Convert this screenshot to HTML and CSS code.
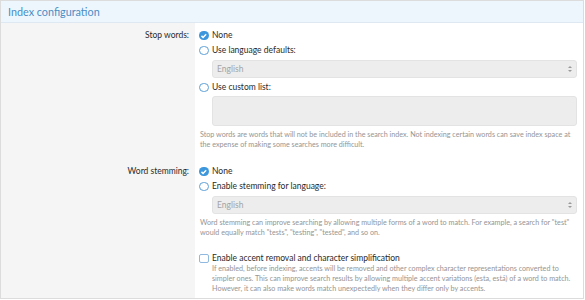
FILE: index.html
```html
<!DOCTYPE html>
<html lang="en">
<head>
    <meta charset="UTF-8">
    <title>Index configuration</title>
    <link rel="stylesheet" href="styles.css">
</head>
<body>
    <div class="block">
        <h2 class="block-header">Index configuration</h2>
        <div class="block-body">
            <dl class="form-row">
                <dt>Stop words:</dt>
                <dd>
                    <label class="choice"><span class="radio checked"><svg viewBox="0 0 10 10"><path d="M2.6 5.1 4.3 6.8 7.5 3.4"/></svg></span>None</label>
                    <label class="choice"><span class="radio"></span>Use language defaults:</label>
                    <div class="select">English<span class="arrows"></span></div>
                    <label class="choice"><span class="radio"></span>Use custom list:</label>
                    <div class="textarea"></div>
                    <p class="hint">Stop words are words that will not be included in the search index. Not indexing certain words can save index space at the expense of making some searches more difficult.</p>
                </dd>
            </dl>
            <dl class="form-row">
                <dt>Word stemming:</dt>
                <dd>
                    <label class="choice"><span class="radio checked"><svg viewBox="0 0 10 10"><path d="M2.6 5.1 4.3 6.8 7.5 3.4"/></svg></span>None</label>
                    <label class="choice"><span class="radio"></span>Enable stemming for language:</label>
                    <div class="select">English<span class="arrows"></span></div>
                    <p class="hint">Word stemming can improve searching by allowing multiple forms of a word to match. For example, a search for "test" would equally match "tests", "testing", "tested", and so on.</p>
                </dd>
            </dl>
            <dl class="form-row last">
                <dt></dt>
                <dd>
                    <label class="choice"><span class="checkbox"></span>Enable accent removal and character simplification</label>
                    <p class="hint indent">If enabled, before indexing, accents will be removed and other complex character representations converted to simpler ones. This can improve search results by allowing multiple accent variations (esta, está) of a word to match. However, it can also make words match unexpectedly when they differ only by accents.</p>
                </dd>
            </dl>
        </div>
    </div>
</body>
</html>
```

FILE: styles.css
```css
body {
    margin: 0;
    font-family: Lato, "Open Sans", sans-serif;
    color: #2a2a2a;
    background-color: #fff;
}
.block {
    width: 582px;
    height: 297px;
    border: 1px solid #dcdcdc;
    overflow: hidden;
}
.block-header {
    margin: 0;
    height: 21px;
    line-height: 22px;
    padding: 0 7px;
    font-size: 10.8px;
    font-weight: normal;
    color: #4a8cc4;
    background-color: #eef6fd;
    border-bottom: 1px solid #dde8f2;
}
.block-body {
    background: linear-gradient(to right, #f5f5f5 194px, #fff 194px);
    height: 275px;
}
.form-row {
    display: grid;
    grid-template-columns: 194px 1fr;
    margin: 0;
}
.form-row dt {
    text-align: right;
    padding: 5px 6px 0 0;
    font-size: 8.5px;
    line-height: 15px;
}
.form-row dd {
    margin: 0;
    padding: 5px 6px 9px 4px;
}
.form-row:nth-child(2) dd {
    padding-bottom: 8px;
}
.form-row.last dd {
    padding-top: 5px;
    padding-bottom: 0;
}
.choice {
    display: flex;
    align-items: center;
    font-size: 8.5px;
    line-height: 15px;
    height: 15px;
}
.radio, .checkbox {
    flex: none;
    box-sizing: border-box;
    width: 9.5px;
    height: 9.5px;
    margin-right: 3.5px;
    border: 1.3px solid #5ba0d8;
    background-color: #fff;
}
.radio {
    border-radius: 50%;
}
.radio svg {
    display: block;
    width: 100%;
    height: 100%;
    fill: none;
    stroke: #fff;
    stroke-width: 1.6;
}
.checkbox {
    border-radius: 2px;
    border-color: #8fb9de;
}
.radio.checked {
    border: none;
    background-color: #3d97dc;
}
.select {
    position: relative;
    box-sizing: border-box;
    margin: 2px 0 2px 13px;
    height: 18px;
    line-height: 16px;
    padding: 0 4px;
    font-size: 8.5px;
    color: #a3a3a3;
    background-color: #ededed;
    border: 1px solid #e3e3e3;
    border-radius: 3px;
}
.arrows {
    position: absolute;
    right: 4px;
    top: 5px;
    width: 0;
    height: 0;
    border-left: 2px solid transparent;
    border-right: 2px solid transparent;
    border-bottom: 2.5px solid #9a9a9a;
}
.arrows::after {
    content: "";
    position: absolute;
    left: -2px;
    top: 3.5px;
    border-left: 2px solid transparent;
    border-right: 2px solid transparent;
    border-top: 2.5px solid #9a9a9a;
}
.textarea {
    box-sizing: border-box;
    margin: 1px 0 0 13px;
    height: 30px;
    background-color: #ededed;
    border: 1px solid #e3e3e3;
    border-radius: 3px;
}
.hint {
    margin: 4px 0 0 1px;
    font-size: 7.2px;
    line-height: 10px;
    color: #959595;
}
.hint.indent {
    margin: -2px 0 0 13px;
}
```
